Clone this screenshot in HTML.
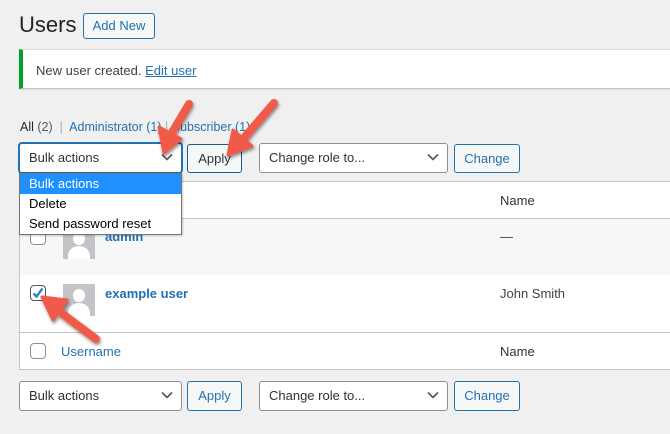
<!DOCTYPE html>
<html><head><meta charset="utf-8"><style>
*{box-sizing:border-box;margin:0;padding:0}
body{width:670px;height:434px;overflow:hidden;background:#f0f0f1;font-family:"Liberation Sans",sans-serif;font-size:13px;color:#3c434a;position:relative}
.a{position:absolute}
.btn{position:absolute;border:1px solid #2271b1;color:#2271b1;background:#f6f7f7;border-radius:3px;font-size:13px;text-align:center}
.sel{position:absolute;border:1px solid #8c8f94;background:#fff;border-radius:3px;font-size:13px;color:#2c3338;padding-left:9px}
.sel svg{position:absolute;right:8px;top:9px}
.cb{position:absolute;width:16px;height:16px;border:1px solid #8c8f94;border-radius:4px;background:#fff}
.av{position:absolute;width:32px;height:32px;background:#c3c4c7;overflow:hidden}
.av:before{content:"";position:absolute;left:10px;top:5px;width:12px;height:13px;border-radius:50%;background:#fff}
.av:after{content:"";position:absolute;left:5px;top:19px;width:22px;height:20px;border-radius:50% 50% 0 0;background:#fff}
a{color:#2271b1}
</style></head><body>
<div class="a" style="left:19px;top:12px;font-size:22px;color:#1d2327">Users</div>
<div class="btn" style="left:83px;top:13px;width:72px;height:26px;line-height:24px">Add New</div>

<div class="a" style="left:19px;top:49px;width:660px;height:40px;background:#fff;border-left:4px solid #00a32a;box-shadow:0 1px 1px rgba(0,0,0,.08);border-top:1px solid #dcdcde;border-bottom:1px solid #c3c4c7"></div>
<div class="a" style="left:36px;top:63px;color:#3c434a">New user created. <a style="text-decoration:underline">Edit user</a></div>

<div class="a" style="left:20px;top:120px;font-size:12.5px"><span style="color:#1d2327">All</span> <span style="color:#50575e">(2)</span> <span style="color:#a7aaad">&nbsp;|&nbsp;</span> <span style="color:#2271b1">Administrator (1)</span> <span style="color:#a7aaad">|</span> <span style="color:#2271b1">Subscriber (1)</span></div>

<div class="sel" style="left:19px;top:143px;width:163px;height:30px;line-height:28px;border-color:#2271b1;box-shadow:0 0 0 1px #2271b1">Bulk actions<svg width="12" height="8" viewBox="0 0 12 8"><path d="M1 1.5l5 5 5-5" fill="none" stroke="#50575e" stroke-width="1.6"/></svg></div>
<div class="btn" style="left:187px;top:144px;width:55px;height:29px;line-height:27px;border-color:#135e96;color:#2c3338">Apply</div>
<div class="sel" style="left:259px;top:143px;width:189px;height:30px;line-height:28px">Change role to...<svg width="12" height="8" viewBox="0 0 12 8"><path d="M1 1.5l5 5 5-5" fill="none" stroke="#50575e" stroke-width="1.6"/></svg></div>
<div class="btn" style="left:454px;top:144px;width:66px;height:29px;line-height:27px">Change</div>

<div class="a" style="left:19px;top:181px;width:660px;height:189px;background:#fff;border:1px solid #c3c4c7"></div>
<div class="a" style="left:20px;top:218px;width:660px;height:1px;background:#c3c4c7"></div>
<div class="a" style="left:20px;top:219px;width:660px;height:56px;background:#f6f7f7"></div>
<div class="a" style="left:20px;top:332px;width:660px;height:1px;background:#c3c4c7"></div>
<div class="a" style="left:500px;top:193px;color:#2c3338">Name</div>
<div class="cb" style="left:30px;top:229px"></div>
<div class="av" style="left:63px;top:227px"></div>
<div class="a" style="left:105px;top:229px;color:#2271b1;font-weight:600">admin</div>
<div class="a" style="left:500px;top:229px">—</div>
<div class="cb" style="left:30px;top:285px;border-color:#50575e"><svg width="16" height="16" viewBox="0 0 16 16" style="position:absolute;left:-1px;top:-1px"><path d="M3.5 8.5l3 3 6-8" fill="none" stroke="#3582c4" stroke-width="2.4"/></svg></div>
<div class="av" style="left:63px;top:284px"></div>
<div class="a" style="left:105px;top:286px;color:#2271b1;font-weight:600">example user</div>
<div class="a" style="left:500px;top:286px;color:#3c434a">John Smith</div>
<div class="cb" style="left:30px;top:343px"></div>
<div class="a" style="left:61px;top:344px;color:#2271b1">Username</div>
<div class="a" style="left:500px;top:344px;color:#2c3338">Name</div>

<div class="a" style="left:19px;top:173px;width:163px;height:62px;background:#fff;border:1px solid #767676;box-shadow:1px 1px 2px rgba(0,0,0,.2)">
<div style="height:20px;line-height:20px;background:#1e90ff;color:#fff;padding-left:9px">Bulk actions</div>
<div style="height:20px;line-height:20px;color:#000;padding-left:9px">Delete</div>
<div style="height:20px;line-height:20px;color:#000;padding-left:9px">Send password reset</div>
</div>

<div class="sel" style="left:19px;top:381px;width:163px;height:30px;line-height:28px">Bulk actions<svg width="12" height="8" viewBox="0 0 12 8"><path d="M1 1.5l5 5 5-5" fill="none" stroke="#50575e" stroke-width="1.6"/></svg></div>
<div class="btn" style="left:187px;top:381px;width:55px;height:30px;line-height:28px">Apply</div>
<div class="sel" style="left:259px;top:381px;width:189px;height:30px;line-height:28px">Change role to...<svg width="12" height="8" viewBox="0 0 12 8"><path d="M1 1.5l5 5 5-5" fill="none" stroke="#50575e" stroke-width="1.6"/></svg></div>
<div class="btn" style="left:454px;top:381px;width:66px;height:30px;line-height:28px">Change</div>

<svg class="a" style="left:0;top:0" width="670" height="434">
<defs><filter id="s"><feDropShadow dx="1" dy="2" stdDeviation="1.5" flood-opacity=".45"/></filter></defs>
<g filter="url(#s)" fill="#f05a48" stroke="#f05a48" stroke-linecap="round" stroke-linejoin="round">
<line x1="189" y1="104" x2="170" y2="136" stroke-width="8"/>
<polygon points="164,153 159,127 181,139" stroke-width="3"/>
<line x1="274" y1="103" x2="243" y2="139" stroke-width="8"/>
<polygon points="228,155 233,130 252,146" stroke-width="3"/>
<line x1="96" y1="339" x2="56" y2="309" stroke-width="8"/>
<polygon points="42,297 67,300 53,320" stroke-width="3"/>
</g></svg>
</body></html>
